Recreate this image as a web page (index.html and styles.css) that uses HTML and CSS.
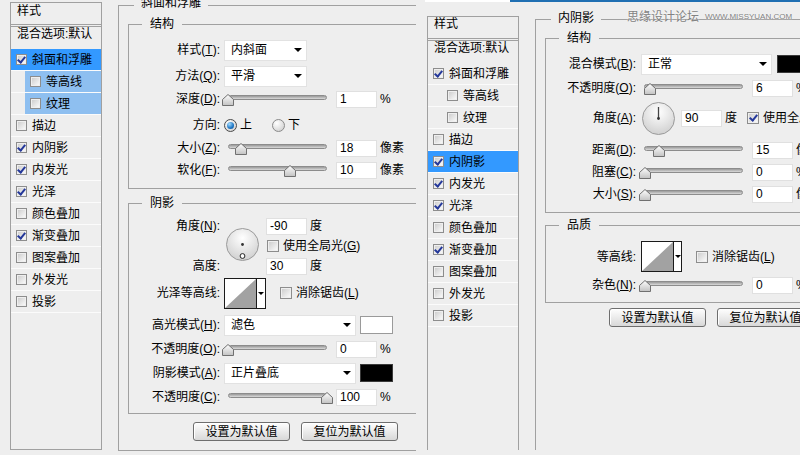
FILE: index.html
```html
<!DOCTYPE html>
<html lang="zh-CN">
<head>
<meta charset="utf-8">
<title>图层样式</title>
<link rel="stylesheet" href="styles.css">
</head>
<body>
<svg class="defs" width="0" height="0" aria-hidden="true">
  <defs>
    <linearGradient id="thumbG" x1="0" y1="0" x2="0" y2="1"><stop offset="0" stop-color="#ffffff"/><stop offset="1" stop-color="#c2c2c2"/></linearGradient>
    <radialGradient id="dialG" cx="50%" cy="30%" r="70%"><stop offset="0" stop-color="#ffffff"/><stop offset="1" stop-color="#d0d0d0"/></radialGradient>
  </defs>
</svg>
<div class="stage">
  <!-- LEFT SCREENSHOT -->
  <section class="shot shot-l">
    <div class="stylelist sl-l">
      <div class="sl-head">样式</div>
      <div class="sl-row sl-blend">混合选项:默认</div>
      <div class="sl-row sel"><span class="cb on"></span><span>斜面和浮雕</span></div>
      <div class="sl-row sub hl"><span class="cb"></span><span>等高线</span></div>
      <div class="sl-row sub hl"><span class="cb"></span><span>纹理</span></div>
      <div class="sl-row"><span class="cb"></span><span>描边</span></div>
      <div class="sl-row"><span class="cb on"></span><span>内阴影</span></div>
      <div class="sl-row"><span class="cb on"></span><span>内发光</span></div>
      <div class="sl-row"><span class="cb on"></span><span>光泽</span></div>
      <div class="sl-row"><span class="cb"></span><span>颜色叠加</span></div>
      <div class="sl-row"><span class="cb on"></span><span>渐变叠加</span></div>
      <div class="sl-row"><span class="cb"></span><span>图案叠加</span></div>
      <div class="sl-row"><span class="cb"></span><span>外发光</span></div>
      <div class="sl-row"><span class="cb"></span><span>投影</span></div>
    </div>

    <div class="frame fr-l">
      <div class="frame-title">斜面和浮雕</div>

      <div class="group g-struct-l">
        <div class="group-title">结构</div>
        <div class="row">
          <span class="lbl">样式(<u>T</u>):</span>
          <div class="dd w83"><span>内斜面</span><i class="arr"></i></div>
        </div>
        <div class="row mt4">
          <span class="lbl">方法(<u>Q</u>):</span>
          <div class="dd w83"><span>平滑</span><i class="arr"></i></div>
        </div>
        <div class="row mt1">
          <span class="lbl">深度(<u>D</u>):</span>
          <div class="slider"><div class="track"></div><span class="thumb" style="left:0px"><svg width="12" height="12" viewBox="0 0 12 12"><path d="M6 .5 11.5 5.5V11.5H.5V5.5Z" fill="url(#thumbG)" stroke="#707070"/></svg></span></div>
          <span class="num">1</span><span class="unit">%</span>
        </div>
        <div class="row mt4">
          <span class="lbl">方向:</span>
          <span class="radio on"></span><span class="rtxt">上</span>
          <span class="radio r2"></span><span class="rtxt">下</span>
        </div>
        <div class="row mt1">
          <span class="lbl">大小(<u>Z</u>):</span>
          <div class="slider"><div class="track"></div><span class="thumb" style="left:13px"><svg width="12" height="12" viewBox="0 0 12 12"><path d="M6 .5 11.5 5.5V11.5H.5V5.5Z" fill="url(#thumbG)" stroke="#707070"/></svg></span></div>
          <span class="num">18</span><span class="unit">像素</span>
        </div>
        <div class="row">
          <span class="lbl">软化(<u>F</u>):</span>
          <div class="slider"><div class="track"></div><span class="thumb" style="left:62px"><svg width="12" height="12" viewBox="0 0 12 12"><path d="M6 .5 11.5 5.5V11.5H.5V5.5Z" fill="url(#thumbG)" stroke="#707070"/></svg></span></div>
          <span class="num">10</span><span class="unit">像素</span>
        </div>
      </div>

      <div class="group g-shadow-l">
        <div class="group-title">阴影</div>
        <div class="angle-grid">
          <span class="lbl g-l1">角度(<u>N</u>):</span>
          <svg class="dial dial-l" width="33" height="33" viewBox="0 0 33 33"><circle cx="16.5" cy="16.5" r="16" fill="url(#dialG)" stroke="#9a9a9a"/><circle cx="16.5" cy="16.5" r="1.4" fill="#333"/><circle cx="16.5" cy="28" r="2.4" fill="#fff" stroke="#222"/></svg>
          <div class="cell g-c1"><span class="num">-90</span><span class="unit">度</span></div>
          <div class="cell g-c2"><span class="cb cb-p"></span><span>使用全局光(<u>G</u>)</span></div>
          <span class="lbl g-l3">高度:</span>
          <div class="cell g-c3"><span class="num">30</span><span class="unit">度</span></div>
        </div>
        <div class="row r-contour mt2">
          <span class="lbl">光泽等高线:</span>
          <div class="contour"><span class="cv"><svg width="31" height="29" viewBox="0 0 31 29"><polygon points="0,29 31,0 31,29" fill="#a2a2a2"/></svg></span><span class="ca"><i class="arr-s"></i></span></div>
          <span class="cb cb-p aa"></span><span>消除锯齿(<u>L</u>)</span>
        </div>
        <div class="row mt5">
          <span class="lbl">高光模式(<u>H</u>):</span>
          <div class="dd w132"><span>滤色</span><i class="arr"></i></div>
          <span class="sw sw-white"></span>
        </div>
        <div class="row mt2">
          <span class="lbl">不透明度(<u>O</u>):</span>
          <div class="slider"><div class="track"></div><span class="thumb" style="left:0px"><svg width="12" height="12" viewBox="0 0 12 12"><path d="M6 .5 11.5 5.5V11.5H.5V5.5Z" fill="url(#thumbG)" stroke="#707070"/></svg></span></div>
          <span class="num">0</span><span class="unit">%</span>
        </div>
        <div class="row mt2">
          <span class="lbl">阴影模式(<u>A</u>):</span>
          <div class="dd w132"><span>正片叠底</span><i class="arr"></i></div>
          <span class="sw sw-black"></span>
        </div>
        <div class="row mt2">
          <span class="lbl">不透明度(<u>C</u>):</span>
          <div class="slider"><div class="track"></div><span class="thumb" style="left:99px"><svg width="12" height="12" viewBox="0 0 12 12"><path d="M6 .5 11.5 5.5V11.5H.5V5.5Z" fill="url(#thumbG)" stroke="#707070"/></svg></span></div>
          <span class="num">100</span><span class="unit">%</span>
        </div>
      </div>

      <div class="btns btns-l">
        <span class="btn">设置为默认值</span>
        <span class="btn">复位为默认值</span>
      </div>
    </div>
  </section>

  <!-- RIGHT SCREENSHOT -->
  <section class="shot shot-r">
    <div class="topbar"><span class="tb-gap"></span><span class="tb-white"></span><span class="tb-blue"></span></div>
    <div class="shot-r-body">
      <div class="stylelist sl-r">
        <div class="sl-head">样式</div>
        <div class="sl-row sl-blend">混合选项:默认</div>
        <div class="sl-row"><span class="cb on"></span><span>斜面和浮雕</span></div>
        <div class="sl-row sub"><span class="cb"></span><span>等高线</span></div>
        <div class="sl-row sub"><span class="cb"></span><span>纹理</span></div>
        <div class="sl-row"><span class="cb"></span><span>描边</span></div>
        <div class="sl-row sel"><span class="cb on"></span><span>内阴影</span></div>
        <div class="sl-row"><span class="cb on"></span><span>内发光</span></div>
        <div class="sl-row"><span class="cb on"></span><span>光泽</span></div>
        <div class="sl-row"><span class="cb"></span><span>颜色叠加</span></div>
        <div class="sl-row"><span class="cb on"></span><span>渐变叠加</span></div>
        <div class="sl-row"><span class="cb"></span><span>图案叠加</span></div>
        <div class="sl-row"><span class="cb"></span><span>外发光</span></div>
        <div class="sl-row"><span class="cb"></span><span>投影</span></div>
      </div>

      <div class="frame fr-r">
        <div class="frame-title">内阴影</div>

        <div class="group g-struct-r">
          <div class="group-title">结构</div>
          <div class="row">
            <span class="lbl">混合模式(<u>B</u>):</span>
            <div class="dd w131"><span>正常</span><i class="arr"></i></div>
            <span class="sw sw-black sw-r"></span>
          </div>
          <div class="row mt2">
            <span class="lbl">不透明度(<u>O</u>):</span>
            <div class="slider"><div class="track"></div><span class="thumb" style="left:6px"><svg width="12" height="12" viewBox="0 0 12 12"><path d="M6 .5 11.5 5.5V11.5H.5V5.5Z" fill="url(#thumbG)" stroke="#707070"/></svg></span></div>
            <span class="num">6</span><span class="unit">%</span>
          </div>
          <div class="row r-angle mt2">
            <span class="lbl">角度(<u>A</u>):</span>
            <svg class="dial dial-r" width="33" height="33" viewBox="0 0 33 33"><circle cx="16.5" cy="16.5" r="16" fill="url(#dialG)" stroke="#9a9a9a"/><line x1="16.5" y1="16.5" x2="16.5" y2="5" stroke="#444" stroke-width="1.3"/><circle cx="16.5" cy="16.5" r="1.4" fill="#333"/></svg>
            <span class="num">90</span><span class="unit">度</span>
            <span class="cb cb-p on gl"></span><span>使用全局光(<u>G</u>)</span>
          </div>
          <div class="row mt4">
            <span class="lbl">距离(<u>D</u>):</span>
            <div class="slider"><div class="track"></div><span class="thumb" style="left:15px"><svg width="12" height="12" viewBox="0 0 12 12"><path d="M6 .5 11.5 5.5V11.5H.5V5.5Z" fill="url(#thumbG)" stroke="#707070"/></svg></span></div>
            <span class="num">15</span><span class="unit">像素</span>
          </div>
          <div class="row">
            <span class="lbl">阻塞(<u>C</u>):</span>
            <div class="slider"><div class="track"></div><span class="thumb" style="left:1px"><svg width="12" height="12" viewBox="0 0 12 12"><path d="M6 .5 11.5 5.5V11.5H.5V5.5Z" fill="url(#thumbG)" stroke="#707070"/></svg></span></div>
            <span class="num">0</span><span class="unit">%</span>
          </div>
          <div class="row">
            <span class="lbl">大小(<u>S</u>):</span>
            <div class="slider"><div class="track"></div><span class="thumb" style="left:1px"><svg width="12" height="12" viewBox="0 0 12 12"><path d="M6 .5 11.5 5.5V11.5H.5V5.5Z" fill="url(#thumbG)" stroke="#707070"/></svg></span></div>
            <span class="num">0</span><span class="unit">像素</span>
          </div>
        </div>

        <div class="group g-quality-r">
          <div class="group-title">品质</div>
          <div class="row r-contour-r">
            <span class="lbl">等高线:</span>
            <div class="contour"><span class="cv"><svg width="31" height="29" viewBox="0 0 31 29"><polygon points="0,29 31,0 31,29" fill="#a2a2a2"/></svg></span><span class="ca"><i class="arr-s"></i></span></div>
            <span class="cb cb-p aa"></span><span>消除锯齿(<u>L</u>)</span>
          </div>
          <div class="row mt2">
            <span class="lbl">杂色(<u>N</u>):</span>
            <div class="slider"><div class="track"></div><span class="thumb" style="left:1px"><svg width="12" height="12" viewBox="0 0 12 12"><path d="M6 .5 11.5 5.5V11.5H.5V5.5Z" fill="url(#thumbG)" stroke="#707070"/></svg></span></div>
            <span class="num">0</span><span class="unit">%</span>
          </div>
        </div>

        <div class="btns btns-r">
          <span class="btn">设置为默认值</span>
          <span class="btn">复位为默认值</span>
        </div>
      </div>
    </div>
    <div class="wm"><span class="wm-cn">思缘设计论坛</span><span class="wm-en">WWW.MISSYUAN.COM</span></div>
  </section>
</div>
</body>
</html>
```

FILE: styles.css
```css
* { box-sizing: border-box; }
html, body { margin: 0; padding: 0; }
body {
  width: 800px;
  height: 455px;
  overflow: hidden;
  background: #eeeeee;
  color: #000;
  font-family: "Liberation Sans", "Noto Sans CJK SC", sans-serif;
  font-size: 12px;
  line-height: 14px;
}
u { text-decoration: underline; text-underline-offset: 1px; }
.defs { display: block; width: 0; height: 0; overflow: hidden; }

.stage { display: flex; width: 800px; height: 455px; }
.shot { flex: none; overflow: hidden; }
.shot-l { width: 416px; height: 455px; display: flex; align-items: flex-start; padding-left: 10px; }
.shot-r { width: 380px; height: 450px; margin-left: 4px; position: relative; }

.topbar { display: flex; height: 2px; }
.tb-gap { width: 5px; }
.tb-white { width: 85px; background: #ffffff; }
.tb-blue { flex: 1; background: #1f6fb2; }
.shot-r-body { display: flex; align-items: flex-start; padding-left: 7px; }

/* style list */
.stylelist { flex: none; width: 92px; border: 1px solid #a0a0a0; }
.sl-l { margin-top: 2px; height: 448px; }
.sl-r { margin-top: 14px; height: 470px; }
.sl-head { height: 24px; border-bottom: 3px double #a0a0a0; padding: 0 0 0 6px; }
.sl-l .sl-head { padding-top: 1px; }
.sl-row {
  height: 22px;
  border-bottom: 1px solid #fbfbfb;
  display: flex;
  align-items: center;
  padding-left: 5px;
  white-space: nowrap;
}
.sl-row.sl-blend { align-items: flex-start; padding-left: 6px; border-bottom-color: transparent; }
.sl-row.sub { padding-left: 19px; }
.sl-row.sel { background: #3399ff; }
.sl-row.hl { background: linear-gradient(90deg, transparent 14px, #8ebff0 14px); }

/* checkbox */
.cb {
  flex: none;
  display: inline-flex;
  align-items: center;
  justify-content: center;
  width: 11px;
  height: 11px;
  border: 1px solid #8d8d8d;
  background: linear-gradient(135deg, #c9c9c9, #f6f6f6 85%);
  box-shadow: inset 0 0 0 1px #efefef;
  margin-right: 5px;
}
.cb.on::after {
  content: "";
  width: 3px;
  height: 6px;
  border: solid #24389a;
  border-width: 0 2px 2px 0;
  transform: translate(0, -1px) rotate(40deg);
}
.cb-p { width: 12px; height: 12px; margin-right: 4px; }

/* frames & groups */
.frame { flex: none; position: relative; border: 1px solid #a0a0a0; padding: 18px 0 0 9px; }
.fr-l { margin-left: 16px; margin-top: 5px; width: 330px; height: 446px; }
.fr-r { margin-left: 16px; margin-top: 17px; width: 300px; height: 470px; }
.frame-title { position: absolute; left: 15px; top: -9px; padding: 0 7px; background: #eeeeee; white-space: nowrap; }
.fr-l .frame-title { top: -10px; }

.group { position: relative; border: 1px solid #a0a0a0; width: 320px; }
.group-title { position: absolute; top: -8px; left: 13px; padding: 0 8px; background: #eeeeee; }
.g-struct-l { height: 165px; padding-top: 14px; }
.g-shadow-l { height: 211px; margin-top: 14px; padding-top: 13px; }
.g-struct-r { height: 175px; padding-top: 14px; }
.g-quality-r { height: 78px; margin-top: 12px; padding-top: 15px; }

/* rows */
.row { display: flex; align-items: center; height: 22px; white-space: nowrap; }
.mt1 { margin-top: 1px; }
.mt2 { margin-top: 2px; }
.mt4 { margin-top: 4px; }
.mt5 { margin-top: 5px; }
.lbl { flex: none; width: 91px; margin-right: 4px; text-align: right; white-space: nowrap; }
.fr-r .lbl { width: 90px; margin-right: 5px; }
.r-contour { height: 32px; }
.r-contour-r { height: 31px; }
.r-angle { height: 34px; }

/* dropdown */
.dd {
  flex: none;
  height: 21px;
  background: #ffffff;
  border: 1px solid #e2e2e2;
  display: flex;
  align-items: center;
  padding: 0 4px 0 6px;
}
.w83 { width: 83px; }
.w131 { width: 131px; }
.w132 { width: 132px; }
.arr { margin-left: auto; width: 0; height: 0; border-left: 4px solid transparent; border-right: 4px solid transparent; border-top: 4px solid #000; }

/* number field */
.num {
  flex: none;
  width: 41px;
  height: 17px;
  background: #ffffff;
  border: 1px solid #e0e0e0;
  padding-left: 3px;
  line-height: 15px;
}
.unit { margin-left: 3px; }

/* slider */
.slider { flex: none; position: relative; width: 99px; height: 14px; margin: 0 9px 0 4px; }
.fr-r .slider { margin-left: 3px; }
.track {
  height: 5px;
  margin-top: 3px;
  border-radius: 3px;
  border: 1px solid #8c8c8c;
  background: linear-gradient(#999999, #dadada);
}
.thumb { position: absolute; top: 2px; width: 12px; height: 12px; margin-left: -6px; display: block; }
.thumb svg { display: block; }

/* radio */
.radio {
  flex: none;
  width: 13px;
  height: 13px;
  border-radius: 50%;
  border: 1px solid #8a8a8a;
  background: radial-gradient(circle at 35% 30%, #ffffff, #d4d4d4 80%);
  display: inline-flex;
  align-items: center;
  justify-content: center;
}
.radio.on { border-color: #4a4a4a; }
.radio.on::after {
  content: "";
  width: 7px;
  height: 7px;
  border-radius: 50%;
  background: radial-gradient(circle at 35% 30%, #a4dcff, #1e76c4 60%, #0b4f93);
}
.rtxt { margin-left: 3px; }
.radio.r2 { margin-left: 20px; }
.radio.r2 + .rtxt { margin-left: 3px; }

/* angle */
.angle-grid { display: grid; grid-template-columns: 95px 42px auto; grid-template-rows: 18px 22px 18px; }
.angle-grid .lbl { align-self: center; }
.g-l1 { grid-area: 1 / 1; }
.g-l3 { grid-area: 3 / 1; }
.dial { flex: none; display: block; }
.dial-l { grid-area: 1 / 2 / 4 / 3; align-self: start; margin: 11px 0 0 2px; }
.dial-r { margin: 0 6px 0 1px; }
.cell { display: flex; align-items: center; white-space: nowrap; }
.g-c1 { grid-area: 1 / 3; }
.g-c2 { grid-area: 2 / 3; padding-left: 1px; }
.g-c3 { grid-area: 3 / 3; }
.cb.gl { margin-left: 10px; }

/* contour */
.contour { flex: none; display: flex; width: 42px; height: 31px; border: 1px solid #1a1a1a; background: #ffffff; }
.r-contour-r .contour { width: 41px; }
.cv { width: 31px; flex: none; }
.cv svg { display: block; }
.ca { flex: 1; border-left: 1px solid #1a1a1a; display: flex; align-items: center; justify-content: center; }
.arr-s { width: 0; height: 0; border-left: 3px solid transparent; border-right: 3px solid transparent; border-top: 3px solid #000; }
.cb.aa { margin-left: 14px; }

/* swatches */
.sw { flex: none; width: 33px; height: 18px; margin-left: 4px; border: 1px solid #9a9a9a; }
.sw-white { background: #ffffff; }
.sw-black { background: #000000; border-color: #3a3a3a; }
.sw-r { margin-left: 5px; }

/* buttons */
.btns { display: flex; gap: 11px; }
.btns-l { margin: 8px 0 0 65px; }
.btns-r { margin: 5px 0 0 64px; }
.btn {
  flex: none;
  width: 97px;
  height: 19px;
  border: 1px solid #6e6e6e;
  border-radius: 3px;
  background: linear-gradient(#fefefe, #ededed 45%, #d8d8d8);
  box-shadow: inset 1px 1px 0 #ffffff;
  display: flex;
  align-items: center;
  justify-content: center;
  white-space: nowrap;
}

/* watermark */
.wm {
  position: absolute;
  left: 207px;
  top: 9px;
  display: flex;
  align-items: center;
  color: #828282;
  white-space: nowrap;
  text-shadow: 0 0 2px #ffffff;
}
.wm-cn { font-family: "Noto Sans CJK SC", sans-serif; font-size: 12px; line-height: 14px; }
.wm-en { font-family: "Liberation Sans", sans-serif; font-size: 8px; line-height: 10px; margin-left: 6px; margin-top: 2px; }
```
